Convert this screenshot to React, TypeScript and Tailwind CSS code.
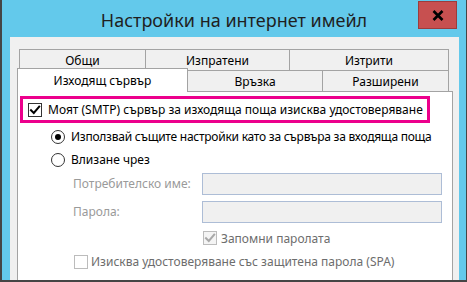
import React from "react";

const font = { fontFamily: '"Noto Sans", "Open Sans", sans-serif' };

function Check({ color = "#000" }: { color?: string }) {
  return (
    <svg width="12" height="12" viewBox="0 0 12 12" className="block">
      <path d="M2 6.2 L4.8 9 L10.2 2.6" fill="none" stroke={color} strokeWidth="2" strokeLinecap="square" />
    </svg>
  );
}

export default function App() {
  return (
    <div
      className="w-[467px] h-[282px] overflow-hidden bg-[#63c9eb] border-l-2 border-r border-b-2 border-[#454545] flex flex-col"
      style={font}
    >
      {/* Title bar */}
      <div className="relative h-[37px] shrink-0 flex items-start justify-center pt-[8px]">
        <span className="text-[18px] leading-[24px] text-[#1f1f1f]">Настройки на интернет имейл</span>
        <div className="absolute right-[9px] top-[1px] w-[39px] h-[28px] bg-[#c75050] border border-[#9c3c3c] flex items-center justify-center">
          <svg width="12" height="11" viewBox="0 0 12 11">
            <path d="M1.5 1 L10.5 10 M10.5 1 L1.5 10" stroke="#000" strokeWidth="2.6" />
          </svg>
        </div>
      </div>

      {/* Client area */}
      <div className="flex-1 ml-[8px] mr-[7px] bg-[#f0f0f0] pt-[12px] pl-[7px] text-[12px] text-black">
        <div className="w-[436px] flex flex-col">
          {/* Tab row 1 */}
          <div className="ml-[2px] w-[430px] h-[21px] flex">
            <div className="w-[126px] border-t border-l border-[#a3a3a3] flex items-center justify-center pt-[2px]">Общи</div>
            <div className="w-[144px] border-t border-l border-[#a3a3a3] flex items-center justify-center pt-[2px]">Изпратени</div>
            <div className="w-[160px] border-t border-l border-r border-[#a3a3a3] flex items-center justify-center pt-[2px]">Изтрити</div>
          </div>
          {/* Tab row 2 */}
          <div className="w-[432px] h-[21px] flex">
            <div className="relative z-10 w-[171px] h-[24px] -mt-[2px] bg-white border-t border-l border-r border-[#a3a3a3] flex items-center justify-center pt-[1px]">
              Изходящ сървър
            </div>
            <div className="w-[134px] border-t border-[#a3a3a3] flex items-center justify-center pt-[2px]">Връзка</div>
            <div className="w-[127px] border-t border-l border-r border-[#a3a3a3] flex items-center justify-center pt-[2px]">Разширени</div>
          </div>
          {/* Page */}
          <div className="relative h-[200px] bg-white border border-[#a3a3a3] pl-[2px] pt-[4px]">
            <div className="w-[410px] h-[27px] border-[3px] border-[#ec008c] flex items-center pl-[5px]">
              <div className="w-[14px] h-[14px] border border-[#333] bg-white flex items-center justify-center">
                <Check />
              </div>
              <span className="ml-[6px]">Моят (SMTP) сървър за изходяща поща изисква удостоверяване</span>
            </div>
            <div className="h-[23px] mt-[2px] flex items-center pl-[31px]">
              <div className="w-[14px] h-[14px] rounded-full border border-[#333] bg-white flex items-center justify-center">
                <div className="w-[6px] h-[6px] rounded-full bg-black" />
              </div>
              <span className="ml-[6px] tracking-[-0.25px]">Използвай същите настройки като за сървъра за входяща поща</span>
            </div>
            <div className="h-[23px] flex items-center pl-[31px]">
              <div className="w-[14px] h-[14px] rounded-full border border-[#333] bg-white" />
              <span className="ml-[6px]">Влизане чрез</span>
            </div>
            <div className="mt-[2px] flex flex-col gap-[6px] pl-[53px]">
              <div className="flex items-center h-[22px]">
                <span className="w-[129px] shrink-0 whitespace-nowrap text-[#9a9a9a]">Потребителско име:</span>
                <div className="w-[240px] h-[22px] bg-[#f0f0f0] border border-[#adbdd6]" />
              </div>
              <div className="flex items-center h-[22px]">
                <span className="w-[129px] shrink-0 whitespace-nowrap text-[#9a9a9a]">Парола:</span>
                <div className="w-[240px] h-[22px] bg-[#f0f0f0] border border-[#adbdd6]" />
              </div>
            </div>
            <div className="h-[24px] mt-[3px] flex items-center pl-[183px]">
              <div className="w-[14px] h-[14px] border border-[#bcbcbc] bg-[#f4f4f4] flex items-center justify-center">
                <Check color="#a8a8a8" />
              </div>
              <span className="ml-[4px] mt-[2px] text-[#6d6d6d]">Запомни паролата</span>
            </div>
            <div className="h-[24px] flex items-center pl-[54px]">
              <div className="w-[14px] h-[14px] border border-[#bcbcbc] bg-white" />
              <span className="ml-[3px] text-[#6d6d6d]">Изисква удостоверяване със защитена парола (SPA)</span>
            </div>
          </div>
        </div>
      </div>
    </div>
  );
}
